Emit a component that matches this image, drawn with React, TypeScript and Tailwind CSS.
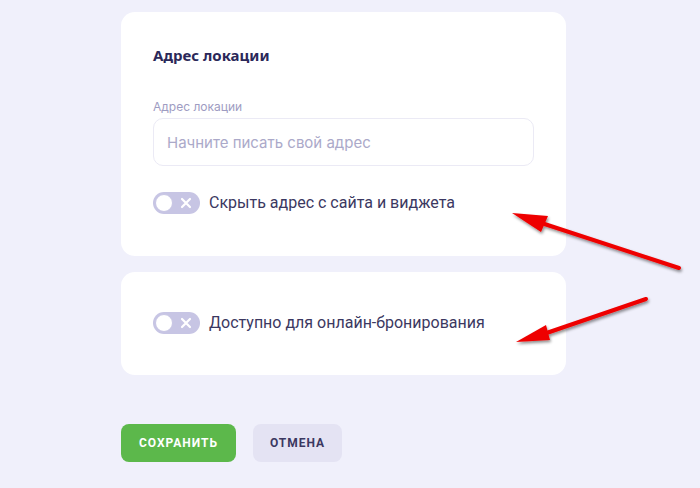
import { useState } from 'react';

function Toggle({ on, onClick }: { on: boolean; onClick: () => void }) {
  return (
    <button
      type="button"
      onClick={onClick}
      className="relative flex h-[22px] w-[47px] shrink-0 items-center rounded-full bg-[#c7c5e4] px-[2px]"
    >
      <span className="h-[18px] w-[18px] rounded-full border-[1.5px] border-[#c7c5e4] bg-white" />
      <svg width="12" height="12" viewBox="0 0 12 12" className="ml-[7px]">
        <path d="M2 2 L10 10 M10 2 L2 10" stroke="#ffffff" strokeWidth="2.2" strokeLinecap="round" />
      </svg>
    </button>
  );
}

function Arrow({ tail, tip, b1, b2 }: { tail: [number, number]; tip: [number, number]; b1: [number, number]; b2: [number, number] }) {
  const mid: [number, number] = [(b1[0] + b2[0]) / 2, (b1[1] + b2[1]) / 2];
  return (
    <g filter="url(#shadow)">
      <line x1={tail[0]} y1={tail[1]} x2={mid[0]} y2={mid[1]} stroke="#ee0000" strokeWidth="4" strokeLinecap="round" />
      <polygon points={`${tip[0]},${tip[1]} ${b1[0]},${b1[1]} ${b2[0]},${b2[1]}`} fill="#ee0000" />
    </g>
  );
}

export default function App() {
  const [hideAddress, setHideAddress] = useState(false);
  const [online, setOnline] = useState(false);

  return (
    <div className="relative min-h-[488px] w-full bg-[#f0f0fb] pl-[121px] pt-[12px] font-['Roboto',sans-serif]">
      <div className="flex w-[445px] flex-col gap-[16px]">
        {/* Address card */}
        <div className="rounded-[14px] bg-white px-[32px] pb-[42px] pt-[33px]">
          <h2 className="text-[15px] font-bold leading-[20px] text-[#2b2859] font-['Noto_Sans',sans-serif]">
            Адрес локации
          </h2>
          <label className="mt-[34px] block text-[12px] leading-[16px] text-[#9e9cc2] font-['Inter',sans-serif]">
            Адрес локации
          </label>
          <input
            placeholder="Начните писать свой адрес"
            className="mt-[3px] h-[48px] w-full rounded-[10px] border border-[#ebeaf5] px-[13px] text-[15px] text-[#3b3861] outline-none placeholder:text-[#aba9c9] font-['Inter',sans-serif]"
          />
          <div className="mt-[26px] flex items-center gap-[9px]">
            <Toggle on={hideAddress} onClick={() => setHideAddress(!hideAddress)} />
            <span className="text-[16px] leading-[20px] text-[#3b3861]">Скрыть адрес с сайта и виджета</span>
          </div>
        </div>

        {/* Online booking card */}
        <div className="flex items-center gap-[9px] rounded-[14px] bg-white px-[32px] pb-[41px] pt-[40px]">
          <Toggle on={online} onClick={() => setOnline(!online)} />
          <span className="text-[16px] leading-[20px] text-[#3b3861]">Доступно для онлайн-бронирования</span>
        </div>
      </div>

      <div className="mt-[49px] flex gap-[17px]">
        <button className="h-[38px] w-[115px] rounded-[8px] bg-[#5cb84b] text-[12px] font-bold tracking-[1px] text-white">
          СОХРАНИТЬ
        </button>
        <button className="h-[38px] w-[89px] rounded-[8px] bg-[#e4e3f3] text-[12px] font-bold tracking-[1px] text-[#3b3861]">
          ОТМЕНА
        </button>
      </div>

      {/* Annotation arrows */}
      <svg className="pointer-events-none absolute left-0 top-0" width="700" height="488">
        <defs>
          <filter id="shadow" x="-20%" y="-50%" width="140%" height="200%">
            <feDropShadow dx="1" dy="2" stdDeviation="1.5" floodColor="#000000" floodOpacity="0.45" />
          </filter>
        </defs>
        <Arrow tail={[679, 268]} tip={[512, 213]} b1={[548, 216]} b2={[541, 232]} />
        <Arrow tail={[646, 299]} tip={[516, 342]} b1={[546, 325]} b2={[550, 340]} />
      </svg>
    </div>
  );
}
